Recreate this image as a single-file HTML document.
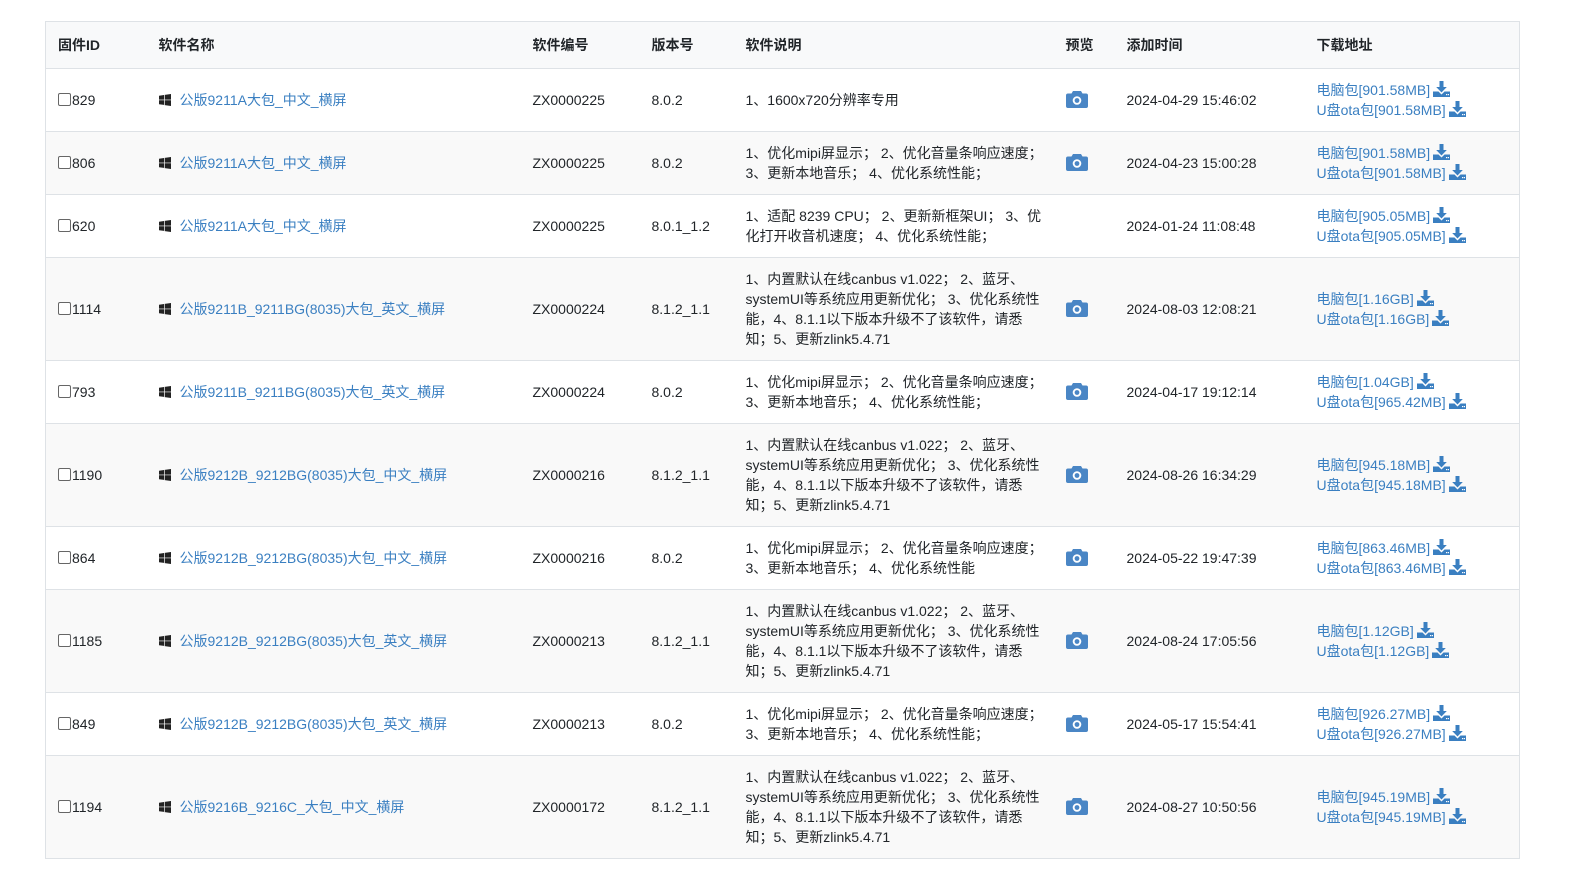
<!DOCTYPE html>
<html><head><meta charset="utf-8">
<style>
body{margin:0;background:#fff;font-family:"Liberation Sans","Noto Sans CJK SC",sans-serif;font-size:14px;color:#212529;}
table{position:absolute;left:45px;top:21px;width:1474px;border-collapse:collapse;border:1px solid #dee2e6;table-layout:fixed;}
td,th{padding:11px 0 11px 12px;line-height:20px;vertical-align:middle;text-align:left;border-top:1px solid #dee2e6;white-space:nowrap;}
th{font-weight:bold;background:#f8f9fa;padding-top:13px;padding-bottom:13px;}
tr.g td{background:#f9f9f9;}
a{color:#3a7fc1;text-decoration:none;}
.cb{display:inline-block;width:11px;height:11px;border:1px solid #666;border-radius:2px;vertical-align:-1px;margin-right:1px;background:#fff;}
.win{display:inline-block;width:12px;height:12px;vertical-align:-1px;margin-right:9px;}
.cam{display:inline-block;vertical-align:middle;position:relative;top:-2px;}
.dl{display:inline-block;vertical-align:-2px;margin-left:3px;}
</style></head><body>
<table>
<colgroup><col style="width:101px"><col style="width:374px"><col style="width:119px"><col style="width:94px"><col style="width:320px"><col style="width:61px"><col style="width:190px"><col style="width:215px"></colgroup>
<thead><tr><th>固件ID</th><th>软件名称</th><th>软件编号</th><th>版本号</th><th>软件说明</th><th>预览</th><th>添加时间</th><th>下载地址</th></tr></thead>
<tbody id="tb"></tbody>
</table>
<script>
var W='<svg class="win" viewBox="0 0 12 12"><path fill="#222" d="M0 1.7L5 1v4.6H0zM5.7 .9L12 0v5.6H5.7zM0 6.3h5v4.6L0 10.2zM5.7 6.3H12V12l-6.3-.9z"/></svg>';
var C='<svg class="cam" width="22" height="18" viewBox="0 0 22 18"><path fill="#4a86c5" d="M7 1h8l1.5 2.5H20a2 2 0 0 1 2 2V16a2 2 0 0 1-2 2H2a2 2 0 0 1-2-2V5.5a2 2 0 0 1 2-2h3.5z"/><circle cx="11" cy="10.5" r="4.3" fill="#fff"/><circle cx="11" cy="10.5" r="2.4" fill="#4a86c5"/></svg>';
var D='<svg class="dl" width="17" height="16" viewBox="0 0 17 16"><path fill="#3a7fc1" d="M6.5 0h4v6h3.3L8.5 11.5 3.2 6h3.3z"/><path fill="#3a7fc1" d="M0 10.5h5.5l3 3 3-3H17V16H0z"/><rect x="13" y="13" width="1.2" height="1.2" fill="#fff"/><rect x="14.8" y="13" width="1.2" height="1.2" fill="#fff"/></svg>';
var A='1、优化mipi屏显示；&nbsp;2、优化音量条响应速度；<br>3、更新本地音乐；&nbsp;4、优化系统性能；';
var B='1、内置默认在线canbus v1.022；&nbsp;2、蓝牙、<br>systemUI等系统应用更新优化；&nbsp;3、优化系统性<br>能，4、8.1.1以下版本升级不了该软件，请悉<br>知；5、更新zlink5.4.71';
var rows=[
['829','公版9211A大包_中文_横屏','ZX0000225','8.0.2','1、1600x720分辨率专用',1,'2024-04-29 15:46:02','901.58MB','901.58MB'],
['806','公版9211A大包_中文_横屏','ZX0000225','8.0.2',A,1,'2024-04-23 15:00:28','901.58MB','901.58MB'],
['620','公版9211A大包_中文_横屏','ZX0000225','8.0.1_1.2','1、适配 8239 CPU；&nbsp;2、更新新框架UI；&nbsp;3、优<br>化打开收音机速度；&nbsp;4、优化系统性能；',0,'2024-01-24 11:08:48','905.05MB','905.05MB'],
['1114','公版9211B_9211BG(8035)大包_英文_横屏','ZX0000224','8.1.2_1.1',B,1,'2024-08-03 12:08:21','1.16GB','1.16GB'],
['793','公版9211B_9211BG(8035)大包_英文_横屏','ZX0000224','8.0.2',A,1,'2024-04-17 19:12:14','1.04GB','965.42MB'],
['1190','公版9212B_9212BG(8035)大包_中文_横屏','ZX0000216','8.1.2_1.1',B,1,'2024-08-26 16:34:29','945.18MB','945.18MB'],
['864','公版9212B_9212BG(8035)大包_中文_横屏','ZX0000216','8.0.2','1、优化mipi屏显示；&nbsp;2、优化音量条响应速度；<br>3、更新本地音乐；&nbsp;4、优化系统性能',1,'2024-05-22 19:47:39','863.46MB','863.46MB'],
['1185','公版9212B_9212BG(8035)大包_英文_横屏','ZX0000213','8.1.2_1.1',B,1,'2024-08-24 17:05:56','1.12GB','1.12GB'],
['849','公版9212B_9212BG(8035)大包_英文_横屏','ZX0000213','8.0.2',A,1,'2024-05-17 15:54:41','926.27MB','926.27MB'],
['1194','公版9216B_9216C_大包_中文_横屏','ZX0000172','8.1.2_1.1',B,1,'2024-08-27 10:50:56','945.19MB','945.19MB']];
var h='';
rows.forEach(function(r,i){
h+='<tr'+(i%2?' class="g"':'')+'><td><span class="cb"></span>'+r[0]+'</td><td>'+W+'<a>'+r[1]+'</a></td><td>'+r[2]+'</td><td>'+r[3]+'</td><td>'+r[4]+'</td><td>'+(r[5]?C:'')+'</td><td>'+r[6]+'</td><td><a>电脑包['+r[7]+']</a>'+D+'<br><a>U盘ota包['+r[8]+']</a>'+D+'</td></tr>';
});
document.getElementById('tb').innerHTML=h;
</script>
</body></html>
